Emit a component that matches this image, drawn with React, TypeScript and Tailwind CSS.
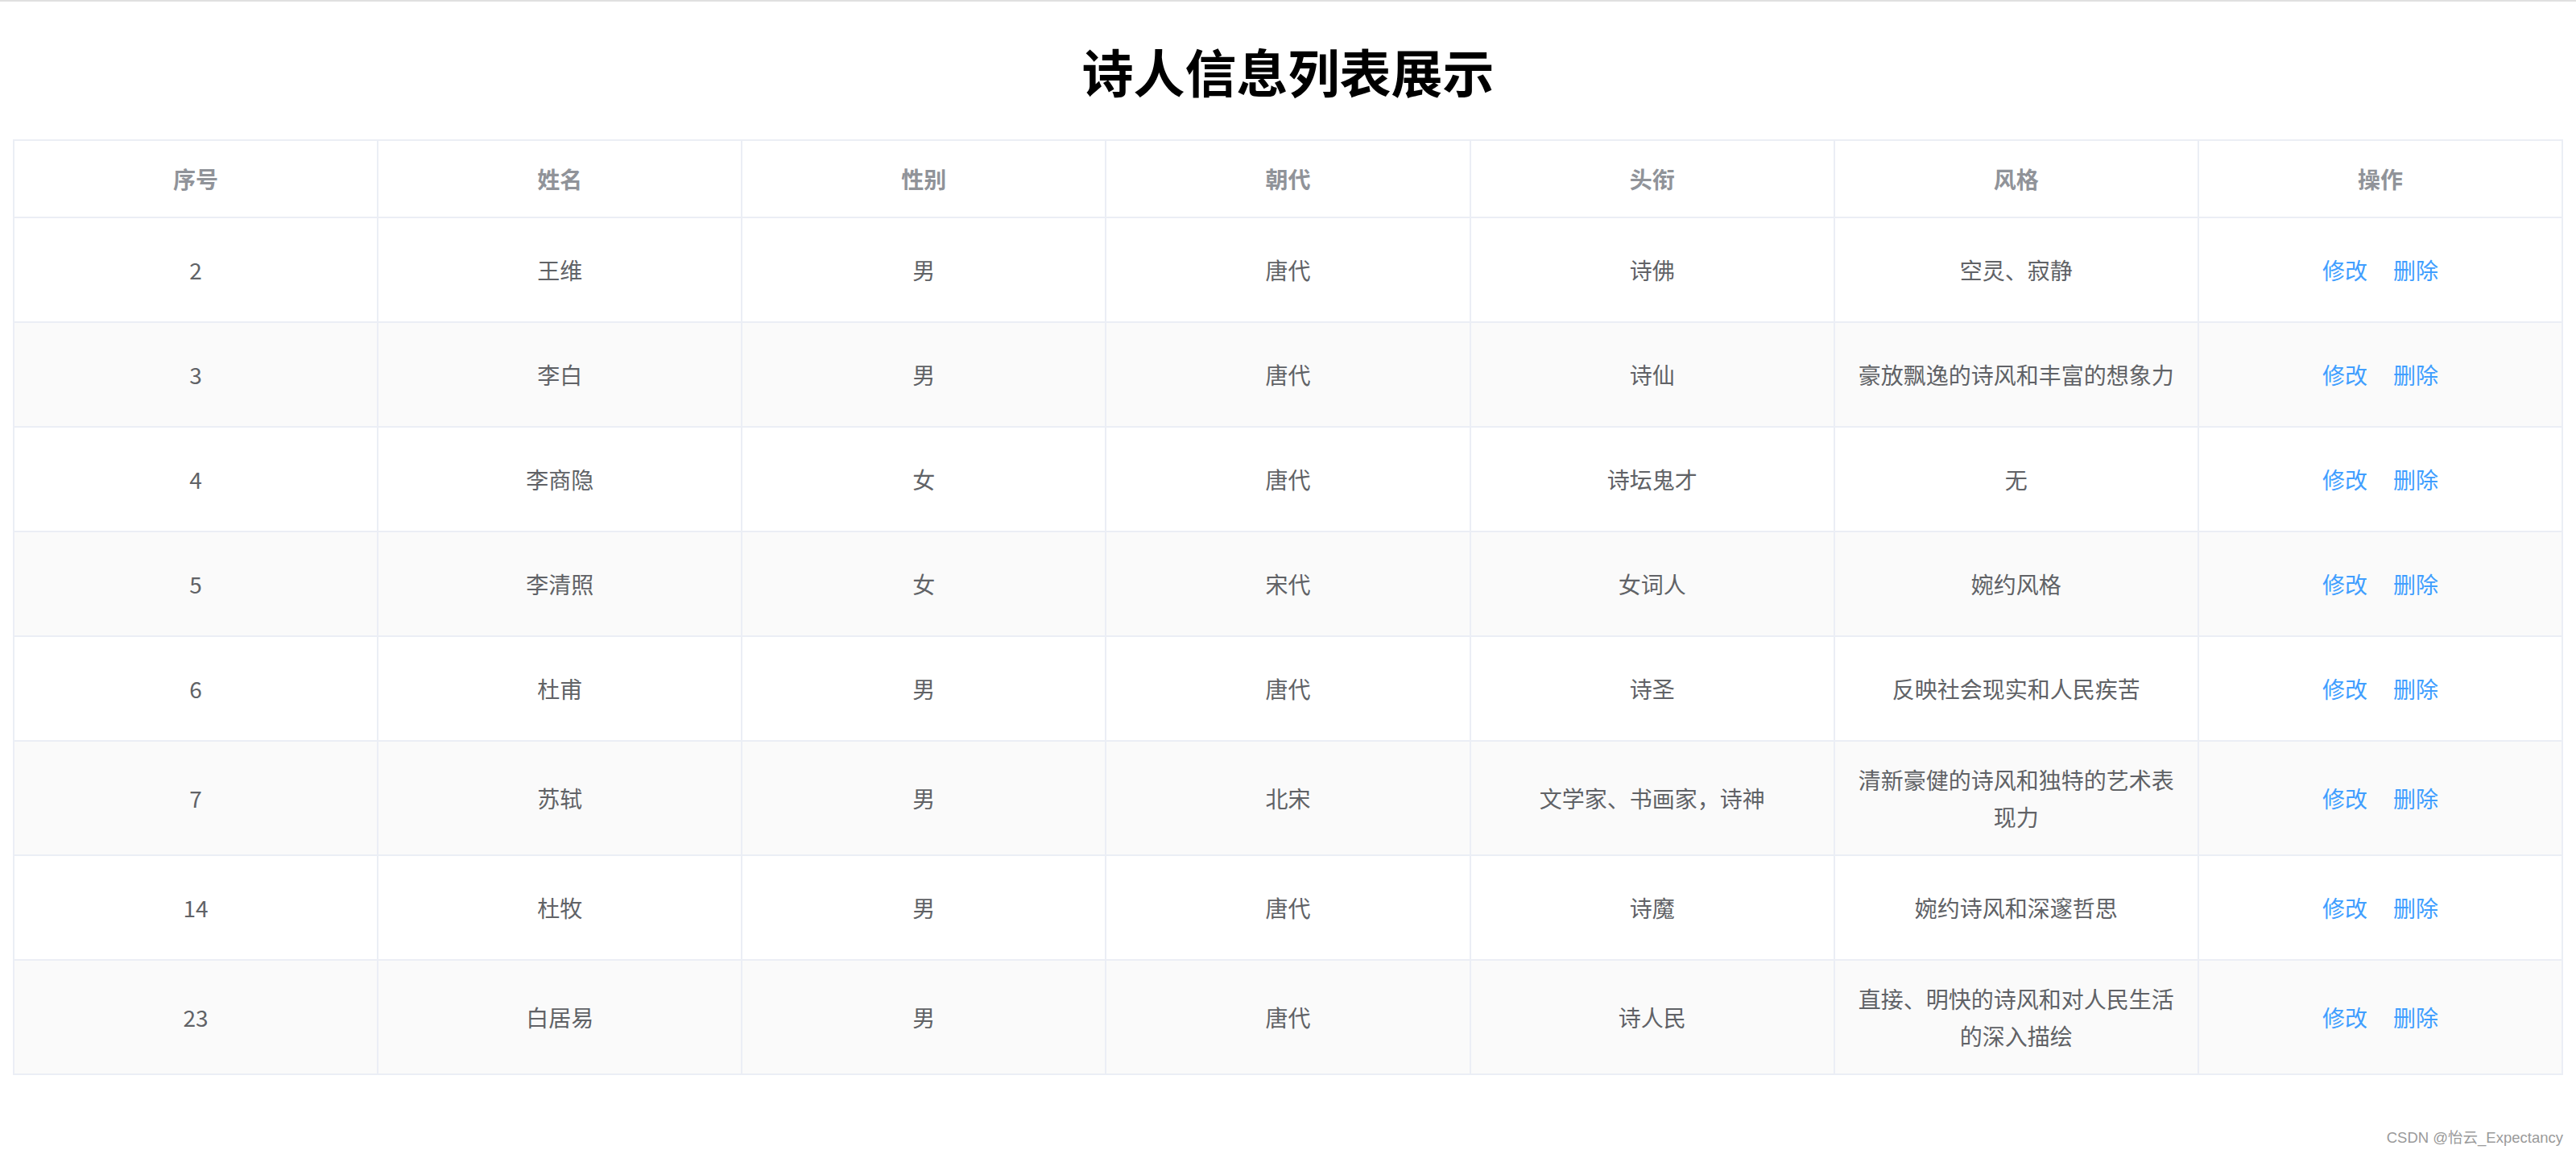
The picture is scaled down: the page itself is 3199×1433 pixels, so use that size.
import React from "react";

type Row = {
  id: string;
  name: string;
  gender: string;
  dynasty: string;
  title: string;
  style: string;
};

const rows: Row[] = [
  { id: "2", name: "王维", gender: "男", dynasty: "唐代", title: "诗佛", style: "空灵、寂静" },
  { id: "3", name: "李白", gender: "男", dynasty: "唐代", title: "诗仙", style: "豪放飘逸的诗风和丰富的想象力" },
  { id: "4", name: "李商隐", gender: "女", dynasty: "唐代", title: "诗坛鬼才", style: "无" },
  { id: "5", name: "李清照", gender: "女", dynasty: "宋代", title: "女词人", style: "婉约风格" },
  { id: "6", name: "杜甫", gender: "男", dynasty: "唐代", title: "诗圣", style: "反映社会现实和人民疾苦" },
  { id: "7", name: "苏轼", gender: "男", dynasty: "北宋", title: "文学家、书画家，诗神", style: "清新豪健的诗风和独特的艺术表现力" },
  { id: "14", name: "杜牧", gender: "男", dynasty: "唐代", title: "诗魔", style: "婉约诗风和深邃哲思" },
  { id: "23", name: "白居易", gender: "男", dynasty: "唐代", title: "诗人民", style: "直接、明快的诗风和对人民生活的深入描绘" },
];

const headers = ["序号", "姓名", "性别", "朝代", "头衔", "风格", "操作"];

const font = { fontFamily: '"Noto Sans CJK SC", "Noto Sans", sans-serif' };

export default function App() {
  return (
    <div className="relative min-h-[1433px] w-full bg-white" style={font}>
      <div className="h-[2px] w-full bg-[#e0e0e0]" />
      <h1 className="pt-[48px] mb-[49px] text-center text-[64px] leading-[74px] font-bold text-black">
        诗人信息列表展示
      </h1>
      <div className="px-[16px]">
        <table className="w-full table-fixed border-separate border-spacing-0 border-l-2 border-t-2 border-[#EBEEF5] text-[28px] leading-[46px]">
          <thead>
            <tr>
              {headers.map((h) => (
                <th
                  key={h}
                  className="border-r-2 border-b-2 border-[#EBEEF5] bg-white px-[20px] py-[24px] text-center align-middle font-bold text-[#909399]"
                >
                  {h}
                </th>
              ))}
            </tr>
          </thead>
          <tbody>
            {rows.map((r, i) => {
              const bg = i % 2 === 1 ? "bg-[#FAFAFA]" : "bg-white";
              const cells = [r.id, r.name, r.gender, r.dynasty, r.title, r.style];
              return (
                <tr key={r.id} className={bg}>
                  {cells.map((c, j) => (
                    <td
                      key={j}
                      className="border-r-2 border-b-2 border-[#EBEEF5] px-[20px] py-[24px] text-center align-middle text-[#606266] break-words"
                    >
                      {c}
                    </td>
                  ))}
                  <td className="border-r-2 border-b-2 border-[#EBEEF5] px-[20px] py-[24px] text-center align-middle">
                    <div className="flex h-[80px] items-center justify-center gap-[32px] text-[#409EFF]">
                      <span className="cursor-pointer">修改</span>
                      <span className="cursor-pointer">删除</span>
                    </div>
                  </td>
                </tr>
              );
            })}
          </tbody>
        </table>
      </div>
      <div
        className="absolute bottom-[9px] right-[16px] text-[18.5px] leading-[22px] text-[#9a9a9a]"
        style={{ fontFamily: '"Liberation Sans", "Noto Sans CJK SC", sans-serif' }}
      >
        CSDN @怡云_Expectancy
      </div>
    </div>
  );
}
